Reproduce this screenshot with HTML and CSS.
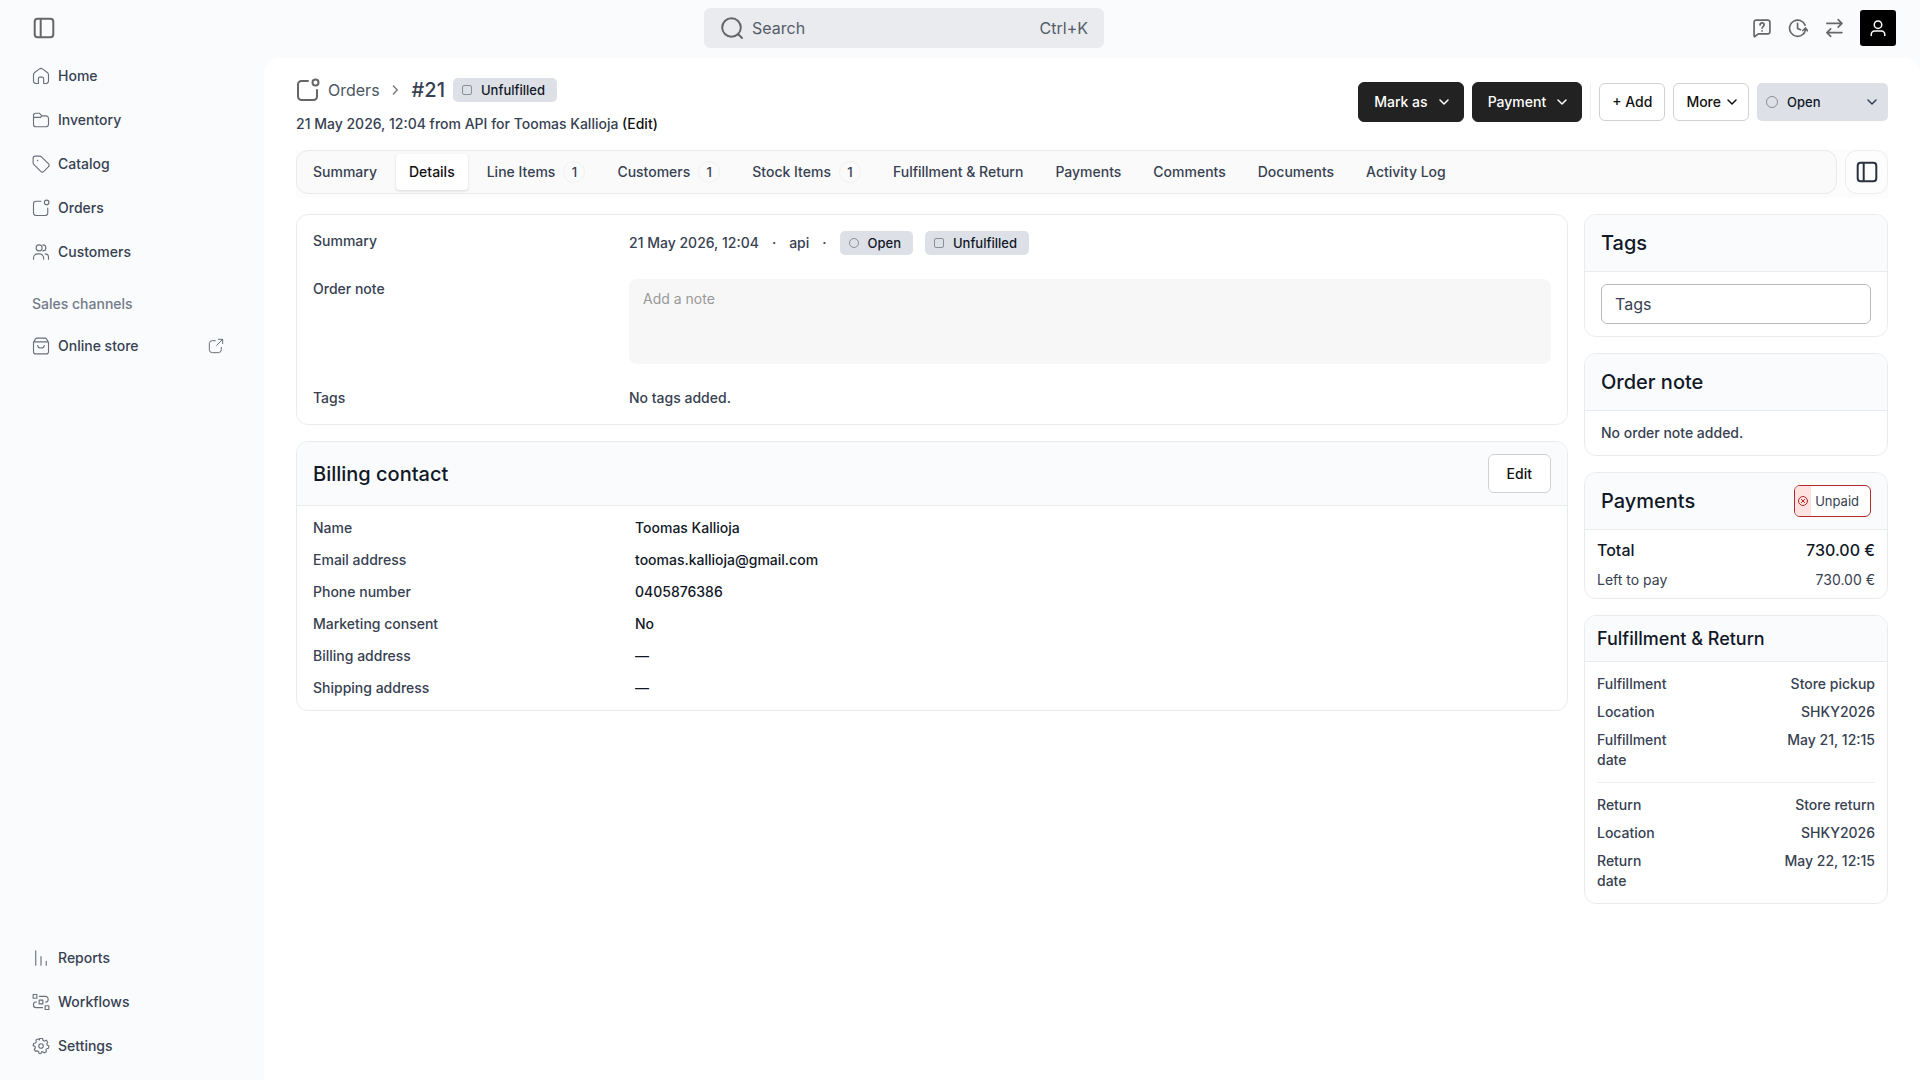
FILE: index.html
```html
<!DOCTYPE html>
<html lang="en">
<head>
    <meta charset="UTF-8">
    <meta name="viewport" content="width=device-width, initial-scale=1.0">
    <title>Order #21</title>
    <link rel="stylesheet" href="styles.css">
</head>
<body>
    <svg class="sprite" aria-hidden="true">
        <symbol id="i-panel" viewBox="0 0 24 24"><rect x="2.7" y="2.7" width="18.6" height="18.6" rx="3"/><path d="M8.7 3v18"/></symbol>
        <symbol id="i-home" viewBox="0 0 24 24"><path d="M8.500 22H5.500A3.500 3.500 0 0 1 2 18.500V10.500a4 4 0 0 1 1.600-3.200l6-4.500a4 4 0 0 1 4.800 0l6 4.500a4 4 0 0 1 1.600 3.200v8a3.500 3.500 0 0 1-3.500 3.500H15.500v-6.500a2 2 0 0 0-2-2h-3a2 2 0 0 0-2 2z"/></symbol>
        <symbol id="i-folder" viewBox="0 0 24 24"><path d="M2 9V6a3 3 0 0 1 3-3h5l3 3.500h5.500A3.500 3.500 0 0 1 22 10v7.500a3.500 3.500 0 0 1-3.500 3.500h-13A3.500 3.500 0 0 1 2 17.500V8.500h9.500l1.500-2"/></symbol>
        <symbol id="i-tag" viewBox="0 0 24 24"><path d="M1.500 4.300v6.200a3 3 0 0 0 .9 2.100l9.200 9.200a3 3 0 0 0 4.200 0l6-6a3 3 0 0 0 0-4.200l-9.200-9.200a3 3 0 0 0-2.100-.9H4.300a2.800 2.800 0 0 0-2.800 2.800z"/><path d="M7.300 7.300h.01" stroke-width="2"/></symbol>
        <symbol id="i-order" viewBox="0 0 24 24"><circle cx="19.500" cy="4.500" r="3"/><path d="M21 12v6.500a3.500 3.500 0 0 1-3.500 3.500H5.500A3.500 3.500 0 0 1 2 18.500V6.500A3.500 3.500 0 0 1 5.500 3H12"/></symbol>
        <symbol id="i-users" viewBox="0 0 24 24"><path d="M2 21.500v-1.500a5.500 5.500 0 0 1 5.500-5.500h2.500a5.500 5.500 0 0 1 5.500 5.500v1.500"/><circle cx="9.500" cy="6.500" r="4"/><path d="M14.500 2.500a4 4 0 0 1 0 8M17.500 14.500a4.500 4.500 0 0 1 4.500 4.500v2.500"/></symbol>
        <symbol id="i-bag" viewBox="0 0 24 24"><path d="M2 7l2.500-4.200A2.500 2.500 0 0 1 6.600 1.500h10.800a2.500 2.500 0 0 1 2.100 1.300L22 7v12.500a3 3 0 0 1-3 3H5a3 3 0 0 1-3-3zM2.500 6.500h19M7.500 11.500c1 4.300 8 4.300 9 0"/></symbol>
        <symbol id="i-external" viewBox="0 0 24 24"><path d="M15.500 2H22v6.500M21.500 2.500 13 11M11 4H6.500A4.500 4.500 0 0 0 2 8.500v9A4.500 4.500 0 0 0 6.500 22h9a4.500 4.500 0 0 0 4.500-4.500V14"/></symbol>
        <symbol id="i-bars" viewBox="0 0 24 24"><path d="M5 2.500v19M12 10v11.500M19 16.500v5"/></symbol>
        <symbol id="i-flow" viewBox="0 0 24 24"><rect x="1.500" y="2" width="5" height="5"/><rect x="17.500" y="17" width="5" height="5"/><rect x="9.500" y="9.500" width="5" height="5"/><path d="M10 4.500h8a3.500 3.500 0 0 1 3.500 3.500v1a3 3 0 0 1-3 3H18M14 19.500H5.500A3.500 3.500 0 0 1 2 16v-1a3 3 0 0 1 3-3h1"/></symbol>
        <symbol id="i-gear" viewBox="0 0 24 24"><circle cx="12" cy="12" r="3"/><path d="M10 2h4l.8 2.700 1.700.8L19 4.200 21 7l-1.300 2.200.5 1.600L22.500 12l-.5 3-2.500.6-.9 1.500.4 2.500-2.600 1.600-2-1.600-1.800.3L12 22.300 9.500 22l-.7-2.600-1.500-.9-2.600.6L3 16.500l1.500-2.100-.4-1.700L1.500 11.500 2.200 8.600l2.500-.6 1-1.500L5.200 4l2.700-1.500L10 4z"/></symbol>
        <symbol id="i-search" viewBox="0 0 24 24"><circle cx="11.500" cy="11.500" r="9.300"/><path d="m18.500 18.500 3.500 3.500"/></symbol>
        <symbol id="i-help" viewBox="0 0 24 24"><path d="M2.500 21.500V5A2.500 2.500 0 0 1 5 2.500h14A2.500 2.500 0 0 1 21.500 5v11.500A2.500 2.500 0 0 1 19 19H7.500L3 22.500zM9.700 8.300c0-3.200 4.800-3.200 4.800 0 0 2-2.400 1.900-2.400 4M12.100 15.500h.01"/></symbol>
        <symbol id="i-clock" viewBox="0 0 24 24"><path d="M11.500 6.500v6l3.500 1.500M20.500 8.500A9.700 9.700 0 1 0 18 19.500c1.600-1.300 2.600-3.200 3-5.500M17.800 15l3.200-3 2.500 3.400"/></symbol>
        <symbol id="i-swap" viewBox="0 0 24 24"><path d="M3.500 6.500h18M17 2l4.500 4.500L17 11M21.500 17.500h-18M8 13l-4.500 4.500L8 22"/></symbol>
        <symbol id="i-user" viewBox="0 0 24 24"><circle cx="12" cy="7.500" r="5"/><path d="M3 22v-1.500a4.500 4.500 0 0 1 4.500-4.500h9a4.500 4.500 0 0 1 4.500 4.500V22"/></symbol>
        <symbol id="i-down" viewBox="0 0 12 12"><path d="m2 4 4 4 4-4"/></symbol>
        <symbol id="i-right" viewBox="0 0 12 12"><path d="m4 3 3 3-3 3"/></symbol>
        <symbol id="i-unpaid" viewBox="0 0 12 12"><circle cx="6" cy="6" r="4.500"/><path d="m4.400 4.400 3.200 3.200M7.600 4.400 4.400 7.600"/></symbol>
    </svg>

    <header class="topbar">
        <button class="icon-btn" aria-label="Toggle sidebar"><svg class="icon-lg"><use href="#i-panel"/></svg></button>
        <label class="search">
            <svg class="icon-lg"><use href="#i-search"/></svg>
            <input type="search" placeholder="Search" aria-label="Search">
            <span>Ctrl+K</span>
        </label>
        <div class="topbar-actions">
            <button class="icon-btn" aria-label="Help"><svg class="icon-md"><use href="#i-help"/></svg></button>
            <button class="icon-btn" aria-label="History"><svg class="icon-md"><use href="#i-clock"/></svg></button>
            <button class="icon-btn" aria-label="Switch"><svg class="icon-md"><use href="#i-swap"/></svg></button>
            <button class="avatar" aria-label="Account"><svg class="icon-md"><use href="#i-user"/></svg></button>
        </div>
    </header>

    <div class="layout">
        <nav class="sidebar">
            <a href="#"><svg><use href="#i-home"/></svg>Home</a>
            <a href="#"><svg><use href="#i-folder"/></svg>Inventory</a>
            <a href="#"><svg><use href="#i-tag"/></svg>Catalog</a>
            <a href="#"><svg><use href="#i-order"/></svg>Orders</a>
            <a href="#"><svg><use href="#i-users"/></svg>Customers</a>
            <p class="nav-title">Sales channels</p>
            <a href="#"><svg><use href="#i-bag"/></svg>Online store<svg class="external"><use href="#i-external"/></svg></a>
            <div class="nav-bottom">
                <a href="#"><svg><use href="#i-bars"/></svg>Reports</a>
                <a href="#"><svg><use href="#i-flow"/></svg>Workflows</a>
                <a href="#"><svg><use href="#i-gear"/></svg>Settings</a>
            </div>
        </nav>

        <main class="page">
            <div class="page-header">
                <div class="page-title">
                    <div class="breadcrumb">
                        <svg class="icon-lg"><use href="#i-order"/></svg>
                        <a href="#">Orders</a>
                        <svg class="chevron"><use href="#i-right"/></svg>
                        <h1>#21</h1>
                        <span class="badge"><i class="mark"></i>Unfulfilled</span>
                    </div>
                    <p>21 May 2026, 12:04 from API for Toomas Kallioja <a href="#">(Edit)</a></p>
                </div>
                <div class="actions">
                    <button class="btn btn-dark">Mark as<svg class="chevron"><use href="#i-down"/></svg></button>
                    <button class="btn btn-dark">Payment<svg class="chevron"><use href="#i-down"/></svg></button>
                    <span class="divider"></span>
                    <button class="btn">+ Add</button>
                    <button class="btn btn-more">More<svg class="chevron"><use href="#i-down"/></svg></button>
                    <div class="status">
                        <i class="mark round"></i>
                        <select aria-label="Order status">
                            <option>Open</option>
                        </select>
                        <svg class="chevron"><use href="#i-down"/></svg>
                    </div>
                </div>
            </div>

            <div class="tabs-row">
                <div class="tabs">
                    <a href="#">Summary</a>
                    <a href="#" class="active">Details</a>
                    <a href="#">Line Items <span class="count">1</span></a>
                    <a href="#">Customers <span class="count">1</span></a>
                    <a href="#">Stock Items <span class="count">1</span></a>
                    <a href="#">Fulfillment &amp; Return</a>
                    <a href="#">Payments</a>
                    <a href="#">Comments</a>
                    <a href="#">Documents</a>
                    <a href="#">Activity Log</a>
                </div>
                <button class="panel-btn" aria-label="Toggle side panel"><svg class="icon-lg"><use href="#i-panel"/></svg></button>
            </div>

            <div class="content">
                <div class="column">
                    <section class="card summary">
                        <span>Summary</span>
                        <div class="summary-line">
                            <span>21 May 2026, 12:04</span><span>·</span><span>api</span><span>·</span>
                            <div class="badges">
                                <span class="badge"><i class="mark round"></i>Open</span>
                                <span class="badge"><i class="mark"></i>Unfulfilled</span>
                            </div>
                        </div>
                        <label for="note">Order note</label>
                        <textarea id="note" placeholder="Add a note"></textarea>
                        <span>Tags</span>
                        <span>No tags added.</span>
                    </section>

                    <section class="card">
                        <div class="card-header">
                            <h2>Billing contact</h2>
                            <button class="btn btn-edit">Edit</button>
                        </div>
                        <dl class="contact">
                            <dt>Name</dt><dd>Toomas Kallioja</dd>
                            <dt>Email address</dt><dd>toomas.kallioja@gmail.com</dd>
                            <dt>Phone number</dt><dd>0405876386</dd>
                            <dt>Marketing consent</dt><dd>No</dd>
                            <dt>Billing address</dt><dd>—</dd>
                            <dt>Shipping address</dt><dd>—</dd>
                        </dl>
                    </section>
                </div>

                <aside class="column">
                    <section class="card">
                        <div class="card-header"><h2><label for="tags">Tags</label></h2></div>
                        <div class="card-body"><input type="text" id="tags" class="input" placeholder="Tags"></div>
                    </section>

                    <section class="card">
                        <div class="card-header"><h2>Order note</h2></div>
                        <div class="card-body">No order note added.</div>
                    </section>

                    <section class="card">
                        <div class="card-header">
                            <h2>Payments</h2>
                            <span class="unpaid"><svg><use href="#i-unpaid"/></svg><span>Unpaid</span></span>
                        </div>
                        <div class="totals">
                            <div class="row total"><span>Total</span><span>730.00 €</span></div>
                            <div class="row"><span>Left to pay</span><span>730.00 €</span></div>
                        </div>
                    </section>

                    <section class="card">
                        <div class="card-header compact"><h2>Fulfillment &amp; Return</h2></div>
                        <div class="fulfillment">
                            <div class="group">
                                <div class="row"><span>Fulfillment</span><span>Store pickup</span></div>
                                <div class="row"><span>Location</span><span>SHKY2026</span></div>
                                <div class="row"><span>Fulfillment date</span><span>May 21, 12:15</span></div>
                            </div>
                            <div class="group">
                                <div class="row"><span>Return</span><span>Store return</span></div>
                                <div class="row"><span>Location</span><span>SHKY2026</span></div>
                                <div class="row"><span>Return<br>date</span><span>May 22, 12:15</span></div>
                            </div>
                        </div>
                    </section>
                </aside>
            </div>
        </main>
    </div>
</body>
</html>
```

FILE: styles.css
```css
* {
    box-sizing: border-box;
}
body {
    margin: 0;
    min-height: 100vh;
    display: flex;
    flex-direction: column;
    background: #fafbfd;
    color: #374151;
    font: 500 14px/20px Inter, sans-serif;
}
h1, h2, p, dl, dd {
    margin: 0;
    font-weight: 500;
}
a {
    color: inherit;
    text-decoration: none;
}
button, input, select, textarea {
    font: inherit;
    color: inherit;
}
button {
    cursor: pointer;
}
svg {
    width: 18px;
    height: 18px;
    flex: none;
    fill: none;
    stroke: #6b6f78;
    stroke-width: 1.5;
    stroke-linecap: round;
    stroke-linejoin: round;
}
.sprite {
    display: none;
}
.icon-lg {
    width: 24px;
    height: 24px;
    stroke: #666;
    stroke-width: 2;
}
.icon-md {
    width: 20px;
    height: 20px;
    stroke: #666;
    stroke-width: 2;
}
.chevron {
    width: 12px;
    height: 12px;
    stroke: currentColor;
}

/* Top bar */
.topbar {
    display: flex;
    align-items: center;
    justify-content: space-between;
    padding: 8px 24px 10px 32px;
}
.icon-btn {
    display: flex;
    padding: 0;
    border: none;
    background: none;
}
.search {
    display: flex;
    align-items: center;
    gap: 8px;
    width: 400px;
    height: 40px;
    padding: 0 16px;
    border-radius: 6px;
    background: #e9ebef;
    color: #555b66;
    font-size: 16px;
    font-weight: 400;
}
.search input {
    flex: 1;
    min-width: 0;
    padding: 0;
    border: none;
    outline: none;
    background: none;
}
.search input::placeholder {
    color: #555b66;
}
.topbar-actions {
    display: flex;
    align-items: center;
    gap: 16px;
}
.avatar {
    display: flex;
    align-items: center;
    justify-content: center;
    width: 36px;
    height: 36px;
    padding: 0;
    border: none;
    border-radius: 3px;
    background: #000;
}
.avatar svg {
    width: 18px;
    height: 18px;
    stroke: #fff;
}

/* Sidebar */
.layout {
    flex: 1;
    display: flex;
}
.sidebar {
    display: flex;
    flex-direction: column;
    gap: 8px;
    width: 264px;
    padding: 0 40px 16px 32px;
}
.sidebar a {
    display: flex;
    align-items: center;
    gap: 8px;
    height: 36px;
}
.nav-title {
    padding: 16px 0 6px;
    color: #737a87;
}
.external {
    width: 16px;
    height: 16px;
    margin-left: auto;
}
.nav-bottom {
    display: flex;
    flex-direction: column;
    gap: 8px;
    margin-top: auto;
}

/* Page */
.page {
    flex: 1;
    min-width: 0;
    padding: 20px 32px 32px;
    border-radius: 16px 16px 0 0;
    background: #fff;
}
.page-header {
    display: flex;
    justify-content: space-between;
    margin-bottom: 16px;
}
.page-title {
    display: flex;
    flex-direction: column;
    gap: 12px;
}
.page-title p a {
    color: #111;
}
.breadcrumb {
    display: flex;
    align-items: center;
    gap: 8px;
    height: 24px;
}
.breadcrumb a {
    font-size: 16px;
    font-weight: 400;
    color: #4b5563;
}
.breadcrumb .chevron {
    width: 16px;
    height: 16px;
    stroke: #777;
    stroke-width: 1;
}
.breadcrumb h1 {
    font-size: 20px;
}
.badge {
    display: inline-flex;
    align-items: center;
    gap: 9px;
    height: 24px;
    padding: 0 12px 0 9px;
    border-radius: 5px;
    background: #dee0e7;
    color: #111827;
    font-size: 13px;
}
.mark {
    width: 10px;
    height: 10px;
    border: 1px solid #8b8f98;
    border-radius: 2px;
}
.mark.round {
    border-radius: 50%;
}
.actions {
    display: flex;
    align-items: center;
    gap: 8px;
    height: 48px;
}
.btn {
    display: flex;
    align-items: center;
    gap: 10px;
    height: 38px;
    padding: 0 12px;
    border: 1px solid #cfd1d5;
    border-radius: 6px;
    background: #fff;
    color: #111;
}
.btn-dark {
    height: 40px;
    padding: 0 13px 0 15px;
    border-color: #222;
    background: #222;
    color: #fff;
}
.btn-more {
    gap: 5px;
    padding: 0 10px 0 12px;
}
.btn-edit {
    height: 39px;
    padding: 0 18px;
}
.divider {
    width: 1px;
    height: 36px;
    background: #eee;
}
.status {
    position: relative;
    width: 131px;
}
.status select {
    appearance: none;
    display: block;
    width: 100%;
    height: 38px;
    padding: 0 30px;
    border: none;
    border-radius: 5px;
    background: #dee0e7;
    color: #111827;
    font-size: 13px;
}
.status .mark {
    position: absolute;
    left: 9px;
    top: 13px;
    width: 12px;
    height: 12px;
}
.status .chevron {
    position: absolute;
    right: 10px;
    top: 13px;
}

/* Tabs */
.tabs-row {
    display: flex;
    gap: 8px;
    margin-bottom: 16px;
    padding-bottom: 4px;
    background: #fcfcfc;
}
.tabs {
    flex: 1;
    display: flex;
    align-items: center;
    gap: 6px;
    height: 44px;
    padding: 0 3px;
    border: 1px solid #e8eaed;
    border-radius: 12px;
    background: #fafafa;
}
.tabs a {
    display: flex;
    align-items: center;
    gap: 8px;
    height: 36px;
    padding: 0 13px;
    border-radius: 4px;
    white-space: nowrap;
}
.tabs .active {
    background: #fff;
    box-shadow: 0 1px 3px #0002;
    color: #111;
}
.count {
    width: 22px;
    height: 22px;
    border: 1px solid #f1f1f2;
    border-radius: 50%;
    font-size: 13px;
    text-align: center;
}
.panel-btn {
    display: flex;
    align-items: center;
    justify-content: center;
    width: 43px;
    height: 44px;
    padding: 0;
    border: 1px solid #edeef0;
    border-radius: 12px;
    background: #fdfdfd;
}
.panel-btn svg {
    stroke: #2b3140;
}

/* Cards */
.content {
    display: grid;
    grid-template-columns: minmax(0, 1fr) 304px;
    gap: 16px;
}
.column {
    display: flex;
    flex-direction: column;
    gap: 16px;
}
.card {
    border: 1px solid #e9ecef;
    border-radius: 12px;
    overflow: hidden;
}
.card-header {
    display: flex;
    align-items: center;
    justify-content: space-between;
    padding: 12px 16px;
    border-bottom: 1px solid #e9ecef;
    background: #f9fbfd;
}
.card-header h2 {
    color: #111827;
    font-size: 20px;
    line-height: 32px;
}
.card-header.compact {
    padding: 12px;
}
.card-header.compact h2 {
    font-size: 18px;
    line-height: 21px;
}
.card-body {
    padding: 12px 16px;
}
.summary {
    display: grid;
    grid-template-columns: 316px 1fr;
    row-gap: 24px;
    padding: 16px;
}
.summary-line {
    display: flex;
    align-items: center;
    gap: 13px;
}
.badges {
    display: flex;
    gap: 12px;
}
.summary textarea {
    width: 100%;
    height: 85px;
    padding: 10px 14px;
    border: none;
    border-radius: 8px;
    background: #f7f7f7;
    resize: none;
}
.summary textarea::placeholder {
    color: #999;
    font-weight: 400;
}
.contact {
    display: grid;
    grid-template-columns: 322px 1fr;
    padding: 6px 16px;
    line-height: 32px;
}
.contact dd {
    color: #111827;
}
.input {
    display: block;
    width: 100%;
    height: 40px;
    padding: 0 13px;
    border: 1px solid #b8babf;
    border-radius: 6px;
    background: #fff;
    font-size: 16px;
    font-weight: 400;
}
.input::placeholder {
    color: #374151;
}
.unpaid {
    display: flex;
    height: 32px;
    border: 1px solid #b3282d;
    border-radius: 6px;
    overflow: hidden;
    background: #fff;
    font-size: 13px;
    line-height: 30px;
}
.unpaid svg {
    width: 16px;
    height: 30px;
    padding: 0 2px;
    background: #fde2e0;
    stroke: #b3282d;
    stroke-width: 1;
}
.unpaid span {
    padding: 0 11px 0 4px;
    font-weight: 400;
}
.row {
    display: flex;
    justify-content: space-between;
    gap: 24px;
}
.row span:first-child {
    max-width: 96px;
}
.row span:last-child {
    text-align: right;
}
.totals {
    display: flex;
    flex-direction: column;
    gap: 8px;
    padding: 8px 12px;
    font-weight: 400;
}
.total {
    color: #111827;
    font-size: 16px;
    font-weight: 500;
    line-height: 24px;
}
.fulfillment {
    padding: 0 12px;
}
.group {
    display: flex;
    flex-direction: column;
    gap: 8px;
    padding: 12px 0;
}
.group + .group {
    border-top: 1px solid #eef0f2;
}
```
